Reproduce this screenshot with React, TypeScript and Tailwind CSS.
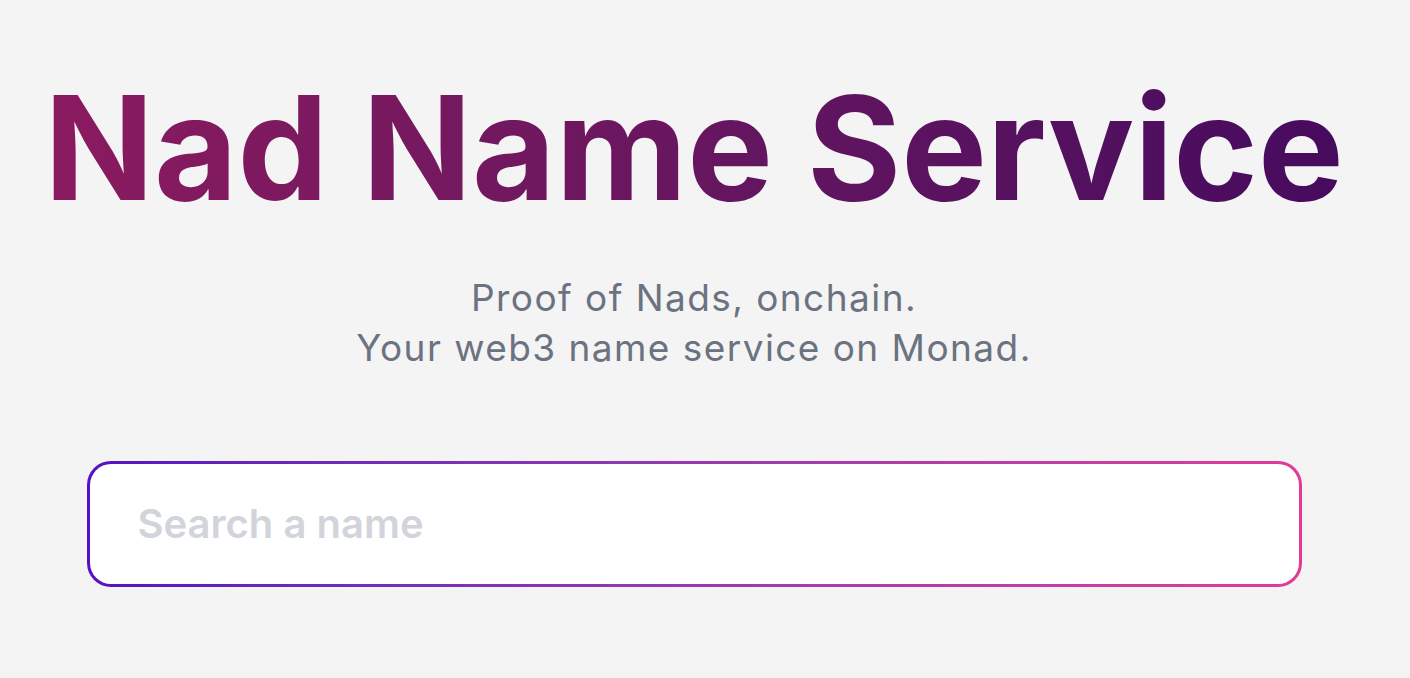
import React from "react";

const Hero = () => {
  return <section className="min-h-[678px] bg-[#f4f4f4] pr-[22px]" style={{ fontFamily: "Inter, 'Noto Sans', sans-serif" }}>
      <div className="flex flex-col items-center pt-[76px]">
        <h1 className="text-[144px] leading-[144px] font-bold whitespace-nowrap bg-gradient-to-r from-[#8b1a5f] to-[#460a5e] bg-clip-text text-transparent">
          Nad Name Service
        </h1>

        <p className="mt-[53px] text-center text-[37px] leading-[50px] tracking-[0.039em] text-[#6b7280]">
          Proof of Nads, onchain.
          <br />
          Your web3 name service on Monad.
        </p>

        <div className="mt-[88px] w-[1215px] rounded-3xl bg-gradient-to-r from-[#5510c4] to-[#e23a99] p-[3px]">
          <div className="h-[120px] rounded-[21px] bg-white flex items-center px-12">
            <input
              type="text"
              placeholder="Search a name"
              className="w-full bg-transparent outline-none text-[40px] font-semibold text-gray-700 placeholder:text-[#d1d5db]"
            />
          </div>
        </div>
      </div>
    </section>;
};

export default function App() {
  return <Hero />;
}
